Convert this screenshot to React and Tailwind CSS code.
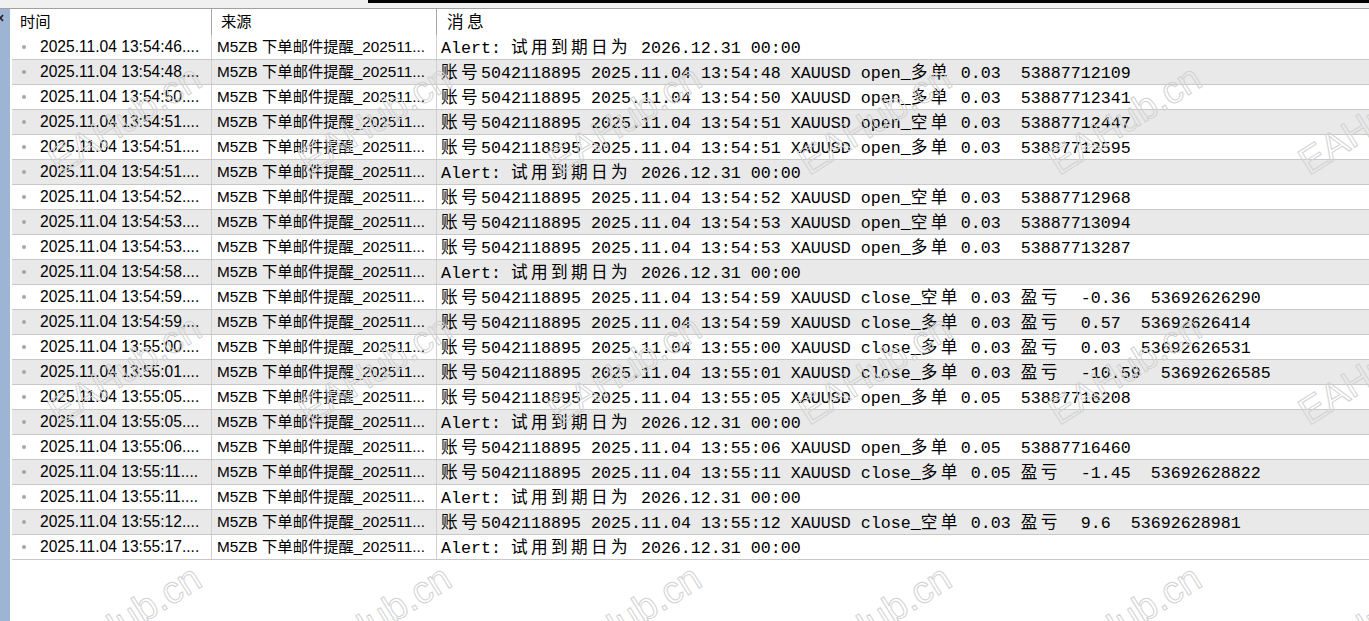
import React from "react";

// Journal rows: time suffix + message text
const rows = [
  { t: "13:54:46", msg: "Alert: 试用到期日为 2026.12.31 00:00" },
  { t: "13:54:48", msg: "账号5042118895 2025.11.04 13:54:48 XAUUSD open_多单 0.03  53887712109" },
  { t: "13:54:50", msg: "账号5042118895 2025.11.04 13:54:50 XAUUSD open_多单 0.03  53887712341" },
  { t: "13:54:51", msg: "账号5042118895 2025.11.04 13:54:51 XAUUSD open_空单 0.03  53887712447" },
  { t: "13:54:51", msg: "账号5042118895 2025.11.04 13:54:51 XAUUSD open_多单 0.03  53887712595" },
  { t: "13:54:51", msg: "Alert: 试用到期日为 2026.12.31 00:00" },
  { t: "13:54:52", msg: "账号5042118895 2025.11.04 13:54:52 XAUUSD open_空单 0.03  53887712968" },
  { t: "13:54:53", msg: "账号5042118895 2025.11.04 13:54:53 XAUUSD open_空单 0.03  53887713094" },
  { t: "13:54:53", msg: "账号5042118895 2025.11.04 13:54:53 XAUUSD open_多单 0.03  53887713287" },
  { t: "13:54:58", msg: "Alert: 试用到期日为 2026.12.31 00:00" },
  { t: "13:54:59", msg: "账号5042118895 2025.11.04 13:54:59 XAUUSD close_空单 0.03 盈亏  -0.36  53692626290" },
  { t: "13:54:59", msg: "账号5042118895 2025.11.04 13:54:59 XAUUSD close_多单 0.03 盈亏  0.57  53692626414" },
  { t: "13:55:00", msg: "账号5042118895 2025.11.04 13:55:00 XAUUSD close_多单 0.03 盈亏  0.03  53692626531" },
  { t: "13:55:01", msg: "账号5042118895 2025.11.04 13:55:01 XAUUSD close_多单 0.03 盈亏  -10.59  53692626585" },
  { t: "13:55:05", msg: "账号5042118895 2025.11.04 13:55:05 XAUUSD open_多单 0.05  53887716208" },
  { t: "13:55:05", msg: "Alert: 试用到期日为 2026.12.31 00:00" },
  { t: "13:55:06", msg: "账号5042118895 2025.11.04 13:55:06 XAUUSD open_多单 0.05  53887716460" },
  { t: "13:55:11", msg: "账号5042118895 2025.11.04 13:55:11 XAUUSD close_多单 0.05 盈亏  -1.45  53692628822" },
  { t: "13:55:11", msg: "Alert: 试用到期日为 2026.12.31 00:00" },
  { t: "13:55:12", msg: "账号5042118895 2025.11.04 13:55:12 XAUUSD close_空单 0.03 盈亏  9.6  53692628981" },
  { t: "13:55:17", msg: "Alert: 试用到期日为 2026.12.31 00:00" },
];

// watermark centres
const marks = [];
[120, 370, 620].forEach((y) => {
  [125, 375, 625, 875, 1125, 1375].forEach((x) => marks.push({ x, y }));
});

// Monospace text where CJK glyphs take two columns
const Mono = ({ text }) => (
  <span className="whitespace-pre">
    {text.split(/([\u3400-\u9fff]+)/).map((part, i) =>
      /[\u3400-\u9fff]/.test(part) ? (
        <span key={i} className="tracking-[3.33px] font-['Noto_Sans_CJK_SC',sans-serif]">
          {part}
        </span>
      ) : (
        <span key={i}>{part}</span>
      )
    )}
  </span>
);

const sans = "font-['Liberation_Sans','Noto_Sans_CJK_SC',sans-serif] text-[15.3px]";
const mono = "font-['Liberation_Mono','Noto_Sans_CJK_SC',monospace] text-[16.67px]";

export default function App() {
  return (
    <div className="relative w-[1369px] h-[621px] overflow-hidden bg-white flex flex-col text-black">
      {/* top edge */}
      <div className="h-[9px] bg-[#f0f0f0] border-b border-[#a0a0a0] flex items-start">
        <div className="ml-[368px] flex-1 h-[3px] bg-black" />
      </div>

      <div className="flex flex-1">
        {/* left panel strip */}
        <div className="w-[10px] bg-[#9db4d4] flex flex-col">
          <svg width="10" height="14" viewBox="0 0 10 14" className="mt-[3px]">
            <path d="M-2 3 L3 9 M3 3 L-2 9" stroke="#222" strokeWidth="1.6" />
          </svg>
        </div>
        <div className="w-[2px] bg-white" />

        {/* table */}
        <div className="flex-1 flex flex-col">
          <div className={`flex h-[26px] bg-white ${sans}`}>
            <div className="w-[200px] border-r border-[#a8a8a8] pl-[8px] flex items-center">时间</div>
            <div className="w-[225px] border-r border-[#a8a8a8] pl-[9px] flex items-center">来源</div>
            <div className={`flex-1 pl-[10px] flex items-center ${mono}`}>
              <Mono text="消息" />
            </div>
          </div>

          {rows.map((r, i) => (
            <div
              key={i}
              className={`flex h-[25px] border-b border-[#c8c8c8] ${i % 2 ? "bg-[#e9e9e9]" : "bg-white"}`}
            >
              <div className="w-[200px] border-r border-[#d0d0d0] flex items-center whitespace-nowrap overflow-hidden font-['Liberation_Sans',sans-serif] text-[15.6px]">
                <span className="ml-[10px] w-[4px] h-[4px] rounded-full bg-[#a6a6a6]" />
                <span className="ml-[14px]">2025.11.04 {r.t}....</span>
              </div>
              <div className={`w-[225px] border-r border-[#d0d0d0] pl-[5px] flex items-center whitespace-nowrap overflow-hidden ${sans}`}>
                M5ZB 下单邮件提醒_202511...
              </div>
              <div className={`flex-1 pl-[4px] flex items-center whitespace-nowrap overflow-hidden ${mono}`}>
                <Mono text={r.msg} />
              </div>
            </div>
          ))}
        </div>
      </div>

      {/* watermark overlay */}
      <div className="pointer-events-none absolute inset-0">
        {marks.map((m, i) => (
          <span
            key={i}
            className="absolute -translate-x-1/2 -translate-y-1/2 -rotate-[32deg] whitespace-nowrap font-['Liberation_Sans',sans-serif] text-[38px] text-transparent [-webkit-text-stroke:1px_#d2d2d2]"
            style={{ left: m.x, top: m.y }}
          >
            EAHub.cn
          </span>
        ))}
      </div>
    </div>
  );
}
